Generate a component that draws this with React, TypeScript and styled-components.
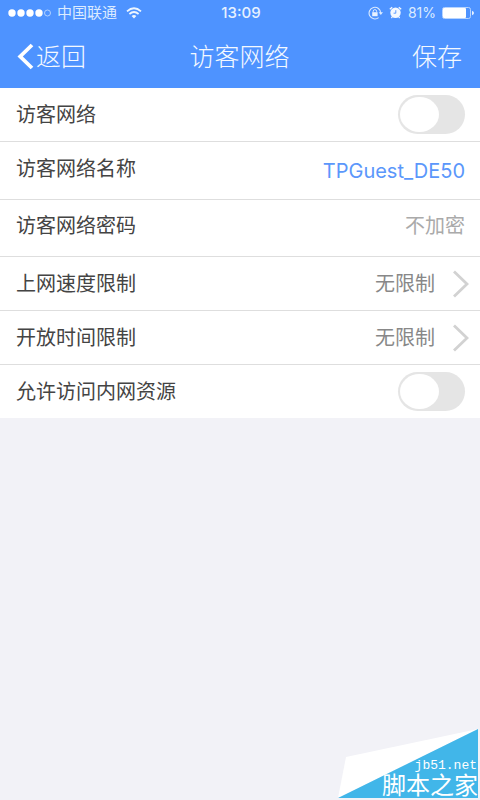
import React, { useState } from "react";
import styled, { createGlobalStyle } from "styled-components";

const GlobalStyle = createGlobalStyle`
  *, *::before, *::after { box-sizing: border-box; }
  body {
    margin: 0;
    background: #f2f2f7;
    font-family: Inter, "Noto Sans CJK SC", sans-serif;
    color: #444;
  }
  button, input { font: inherit; color: inherit; }
`;

const Page = styled.div`
  position: relative;
  display: flex;
  flex-direction: column;
  min-height: 100vh;
  background: #f2f2f7;
`;

const Header = styled.header`
  background: #4e93ff;
  color: #f4f9ff;
`;

const StatusBar = styled.div`
  display: grid;
  grid-template-columns: 1fr auto 1fr;
  align-items: center;
  height: 25px;
  padding: 0 6px 0 8px;
  font-size: 14px;
  line-height: 24px;
`;

const StatusGroup = styled.div<{ $end?: boolean }>`
  display: flex;
  align-items: center;
  justify-content: ${(p) => (p.$end ? "flex-end" : "flex-start")};
  gap: 6px;
  color: #dcebff;
`;

const Carrier = styled.span`
  font-size: 15px;
  padding-right: 3px;
`;

const Clock = styled.span`
  font-size: 15px;
  font-weight: 500;
  color: #e6f1ff;
`;

const NavBar = styled.nav`
  display: grid;
  grid-template-columns: 1fr auto 1fr;
  align-items: center;
  height: 63px;
  padding: 0 18px 0 17px;
`;

const NavButton = styled.button<{ $end?: boolean }>`
  display: flex;
  align-items: center;
  gap: 2px;
  justify-self: ${(p) => (p.$end ? "end" : "start")};
  padding: 0;
  border: 0;
  background: none;
  color: #f4f9ff;
  font-size: 25px;
  font-weight: 300;
  line-height: 36px;
  cursor: pointer;
`;

const Title = styled.h1`
  margin: 0;
  font-size: 25px;
  line-height: 36px;
  font-weight: 300;
`;

const Settings = styled.main`
  background: #fff;
`;

const Row = styled.div<{ $height?: number }>`
  display: flex;
  align-items: center;
  justify-content: space-between;
  box-sizing: content-box;
  height: ${(p) => p.$height ?? 53}px;
  padding: 0 15px 0 16px;
  border-bottom: 1px solid #dedede;
  font-size: 20px;
  line-height: 30px;

  &:last-child { border-bottom: 0; }
`;

const Label = styled.label<{ $raised?: boolean }>`
  flex: none;
  padding-bottom: ${(p) => (p.$raised ? 4 : 0)}px;
`;

const Field = styled.input`
  flex: 1;
  min-width: 0;
  height: 30px;
  padding: 0;
  border: 0;
  outline: 0;
  background: none;
  text-align: right;
  color: #5b97fb;
`;

const PasswordField = styled(Field)`
  height: 34px;
  padding-bottom: 4px;

  &::placeholder { color: #aaa; opacity: 1; }
`;

const Picker = styled.button`
  display: flex;
  flex: 1;
  align-items: center;
  justify-content: flex-end;
  gap: 18px;
  height: 100%;
  margin-right: -4px;
  padding: 0;
  border: 0;
  background: none;
  color: #888;
  cursor: pointer;
`;

const Toggle = styled.input`
  appearance: none;
  display: flex;
  align-items: center;
  flex: none;
  width: 67px;
  height: 39px;
  margin: 0;
  padding: 2px;
  border-radius: 20px;
  background: #e5e5e5;
  cursor: pointer;

  &::before {
    content: "";
    width: 39px;
    height: 35px;
    border-radius: 50%;
    background: #fff;
  }
  &:checked { background: #4e93ff; justify-content: flex-end; }
`;

const Watermark = styled.aside`
  position: absolute;
  right: 2px;
  bottom: 2px;
  display: flex;
  flex-direction: column;
  align-items: flex-end;
  justify-content: flex-end;
  width: 140px;
  height: 69px;
  color: #fff;
`;

const WatermarkShape = styled.svg`
  position: absolute;
  inset: 0;
`;

const SiteAddress = styled.span`
  position: relative;
  padding-right: 1px;
  font-family: "Liberation Mono", monospace;
  font-size: 13px;
  line-height: 16px;
`;

const SiteName = styled.span`
  position: relative;
  font-size: 24px;
  line-height: 24px;
`;

const SignalIcon = () => (
  <svg width="43" height="10" viewBox="0 0 43 10" aria-hidden="true">
    {[4, 13, 22, 31].map((x) => (
      <circle key={x} cx={x} cy="5" r="3.7" fill="#fff" />
    ))}
    <circle cx="39.5" cy="5" r="3" fill="none" stroke="#bcd8ff" strokeWidth="0.9" />
  </svg>
);

const WifiIcon = () => (
  <svg width="16" height="12" viewBox="0 0 16 12" fill="none" stroke="#eef6ff" aria-hidden="true">
    <path d="M1 4.4Q8-1.8 15 4.4" strokeWidth="1.8" />
    <path d="M3.4 7Q8 3.1 12.6 7" strokeWidth="1.8" />
    <path d="M5.6 9L8 11.4L10.4 9Q8 7.2 5.6 9Z" fill="#eef6ff" stroke="none" />
  </svg>
);

const RotationLockIcon = () => (
  <svg width="15" height="14" viewBox="0 0 15 14" fill="none" stroke="#dcebff" aria-hidden="true">
    <path d="M10.6 11.6A5.8 5.8 0 1 1 12.7 7" strokeWidth="1.1" />
    <path d="M10.7 6.2H15L12.8 9Z" fill="#dcebff" stroke="none" />
    <rect x="4.2" y="6.2" width="5.4" height="4" fill="#e8f2ff" stroke="none" />
    <path d="M5.2 6.3V5.3A1.7 1.7 0 0 1 8.6 5.3V6.3" strokeWidth="1" />
  </svg>
);

const AlarmIcon = () => (
  <svg width="13" height="13" viewBox="0 0 13 13" aria-hidden="true">
    <circle cx="6.5" cy="6.8" r="5.2" fill="#f4f9ff" />
    <path d="M.8 3.2L3.2 1.2M12.2 3.2L9.8 1.2M3.2 11L2.4 12M9.8 11L10.6 12" stroke="#f4f9ff" strokeWidth="1.3" />
    <path d="M6.8 4.2V7.2H4.6" fill="none" stroke="#4e93ff" strokeWidth="0.9" />
  </svg>
);

const BatteryIcon = () => (
  <svg width="32" height="12" viewBox="0 0 32 12" aria-hidden="true">
    <rect x=".5" y=".5" width="28" height="11" rx="2" fill="none" stroke="#b7d4ff" />
    <rect x="1" y="1" width="23" height="10" rx="1" fill="#fff" />
    <path d="M30 3.8Q32 4.5 32 6Q32 7.5 30 8.2Z" fill="#e8f2ff" />
  </svg>
);

const BackIcon = () => (
  <svg width="17" height="27" viewBox="0 0 17 27" fill="none" stroke="#fff" strokeWidth="3.8" aria-hidden="true">
    <path d="M15 2L3.2 13.5L15 25" />
  </svg>
);

const ChevronIcon = () => (
  <svg width="16" height="28" viewBox="0 0 16 28" fill="none" stroke="#d2d2d2" strokeWidth="2.8" aria-hidden="true">
    <path d="M1 1.5L14 14L1 26.5" />
  </svg>
);

function PickerRow({ id, label, value }: { id: string; label: string; value: string }) {
  return (
    <Row>
      <Label htmlFor={id}>{label}</Label>
      <Picker id={id} type="button">
        <span>{value}</span>
        <ChevronIcon />
      </Picker>
    </Row>
  );
}

function ToggleRow({ id, label }: { id: string; label: string }) {
  const [on, setOn] = useState(false);
  return (
    <Row>
      <Label htmlFor={id}>{label}</Label>
      <Toggle id={id} type="checkbox" role="switch" checked={on} onChange={() => setOn(!on)} />
    </Row>
  );
}

export default function App() {
  return (
    <>
      <GlobalStyle />
      <Page>
        <Header>
          <StatusBar>
            <StatusGroup>
              <SignalIcon />
              <Carrier>中国联通</Carrier>
              <WifiIcon />
            </StatusGroup>
            <Clock>13:09</Clock>
            <StatusGroup $end>
              <RotationLockIcon />
              <AlarmIcon />
              <span>81%</span>
              <BatteryIcon />
            </StatusGroup>
          </StatusBar>
          <NavBar>
            <NavButton type="button">
              <BackIcon />
              返回
            </NavButton>
            <Title>访客网络</Title>
            <NavButton type="button" $end>
              保存
            </NavButton>
          </NavBar>
        </Header>
        <Settings>
          <ToggleRow id="guest" label="访客网络" />
          <Row $height={57}>
            <Label htmlFor="name" $raised>访客网络名称</Label>
            <Field id="name" type="text" defaultValue="TPGuest_DE50" />
          </Row>
          <Row $height={56}>
            <Label htmlFor="password" $raised>访客网络密码</Label>
            <PasswordField id="password" type="text" placeholder="不加密" />
          </Row>
          <PickerRow id="speed" label="上网速度限制" value="无限制" />
          <PickerRow id="time" label="开放时间限制" value="无限制" />
          <ToggleRow id="intranet" label="允许访问内网资源" />
        </Settings>
        <Watermark>
          <WatermarkShape width="140" height="69" viewBox="0 0 140 69" aria-hidden="true">
            <path d="M140 0L8 28L0 69Z" fill="#fff" />
            <path d="M140 0V69H0Z" fill="#41b6e9" />
          </WatermarkShape>
          <SiteAddress>jb51.net</SiteAddress>
          <SiteName>脚本之家</SiteName>
        </Watermark>
      </Page>
    </>
  );
}
